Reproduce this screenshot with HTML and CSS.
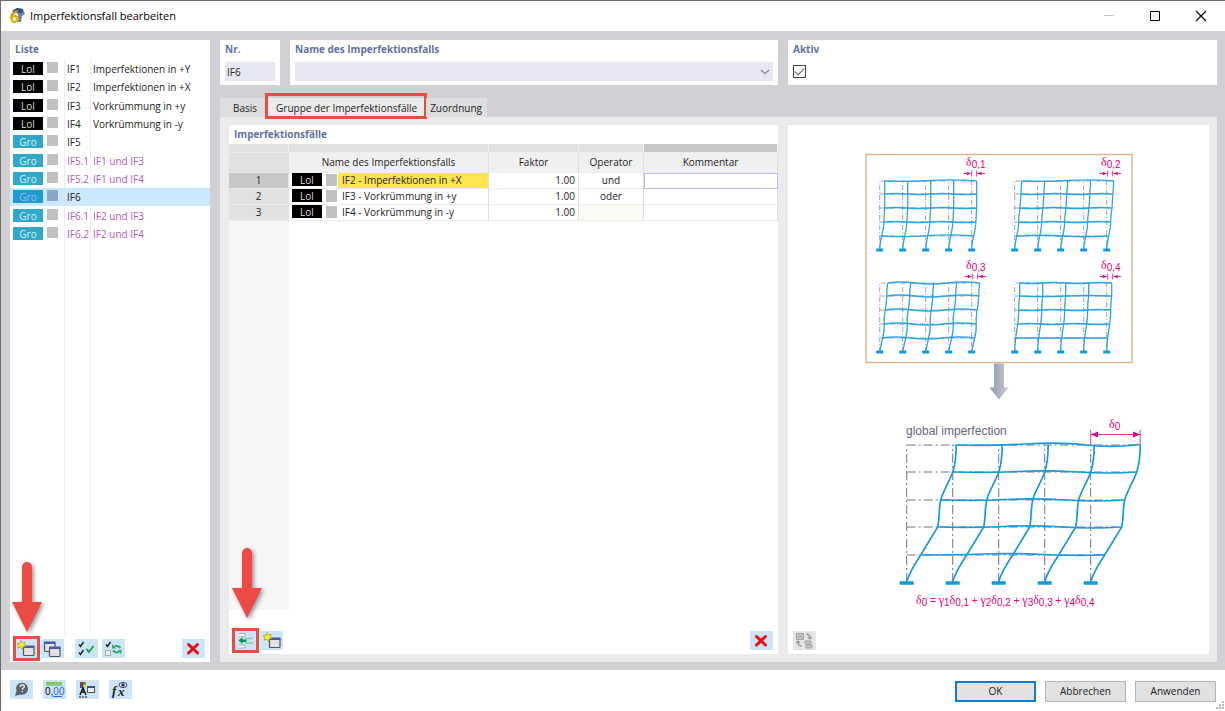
FILE: index.html
```
<!DOCTYPE html>
<html lang="de">
<head>
<meta charset="utf-8">
<title>Imperfektionsfall bearbeiten</title>
<link rel="stylesheet" href="styles.css">
</head>
<body>
<svg class="defs" aria-hidden="true">
  <defs>
    <g id="win">
      <rect x="9.500" y="7.500" width="10.500" height="9" rx="1" fill="#e2e2e2" stroke="#555" stroke-width="1.200" />
      <rect x="9" y="6.500" width="11.500" height="2.500" fill="#4a5a9a" />
    </g>
    <g id="new">
      <use href="#win" />
      <path d="M7 1.500l1.300 2.500 3-.8-1.300 2.600 2.200 1.600-3 .3-.7 2.800-1.800-2.300-2.700.8 1-2.500-2-1.800 2.900-.3z" fill="#f6ee28" stroke="#a99a1c" stroke-width=".7" />
    </g>
    <g id="tick"><path d="M0 2.500l1.500 2L4.500 0" fill="none" stroke="#222" stroke-width="1.400" /></g>
    <g id="cross"><path d="M6.500 5.500l9 8.500M15.500 5.500l-9 8.500" fill="none" stroke="#f00909" stroke-width="3" stroke-linecap="round" /></g>
    <g id="pointer"><path d="M11 5a5 5 0 0 1 10 0V40H31L16 70 1 40H11z" fill="#eb4b44" /></g>
    <path id="base" d="M-3.500 0h7" stroke="#0d9be0" stroke-width="3" />
    <g id="bases"><use href="#base" /><use href="#base" x="23" /><use href="#base" x="46" /><use href="#base" x="69" /><use href="#base" x="92" /></g>
    <path id="ghost" d="M0 0V-69H92V0M23 0V-69M46 0V-69M69 0V-69M0-14H92M0-28H92M0-42H92M0-56H92" fill="none" stroke="#8d8c9b" stroke-width=".8" stroke-dasharray="5 2 1 2" />
    <path id="c1" d="M0 0Q0-5 2-14T4.200-28 5-42V-69" />
    <path id="c2" d="M0 0Q0-5 2-14T4-28 5.300-42L7-69" />
    <path id="c3" d="M0 0Q1-6 3-14T4.500-28 5.500-42 7-56 8-69" />
    <path id="c4" d="M0 0Q0-6 1-14T3-28 4-42 5-56V-69" />
    <path id="cg" d="M0 0C2-8 8-18 14-27L31-55C33-64 32-74 34-82 36-90 43-101 46-110 49-119 49.500-128 49.500-137" />
    <g id="dim">
      <path d="M-8 0h7M5.500 0h8M0-3v6M5-3v6" stroke="#e5007d" stroke-width=".8" />
      <path d="M-1 0l-4-1.700v3.400zM6 0l4-1.700v3.400z" fill="#e5007d" />
    </g>
    <linearGradient id="steel"><stop offset="0" stop-color="#8796b5" /><stop offset=".4" stop-color="#a3abbd" /><stop offset="1" stop-color="#d2cbc5" /></linearGradient>
  </defs>
</svg>

<div class="window">
  <header class="titlebar">
    <svg class="app-icon" viewBox="0 0 16 16" aria-hidden="true">
      <path d="M3 3l5-3 6 1 2 5-3 2-1 6-4 0 1-8z" fill="#6c86ab" /><path d="M3 3l5-3 6 1-1 4-6 0z" fill="#32527f" />
      <path d="M8 3.500Q3 4 2.200 10" fill="none" stroke="#c79a17" stroke-width="2.500" stroke-linecap="round" />
      <circle cx="5.500" cy="11" r="3" fill="#fff6bd" stroke="#dfb51c" stroke-width="2.400" />
    </svg>
    <h1>Imperfektionsfall bearbeiten</h1>
    <div class="caption-buttons">
      <button type="button" aria-label="Minimieren"><svg viewBox="0 0 12 12"><path d="M1 5.500h10" stroke="#c4c4c4" /></svg></button>
      <button type="button" aria-label="Maximieren"><svg viewBox="0 0 12 12"><path d="M1.500 1.500h9v9h-9z" fill="none" stroke="#000" /></svg></button>
      <button type="button" aria-label="Schließen"><svg viewBox="0 0 12 12"><path d="M1 1l10 10M11 1L1 11" stroke="#000" stroke-width="1.200" /></svg></button>
    </div>
  </header>

  <main class="workspace">
    <section class="panel list-panel">
      <h2>Liste</h2>
      <div class="list-body">
        <table class="case-list">
          <tbody>
            <tr><td><div class="badge"><span class="chip">Lol</span><i class="swatch"></i></div></td><td>IF1</td><td>Imperfektionen in +Y</td></tr>
            <tr><td><div class="badge"><span class="chip">Lol</span><i class="swatch"></i></div></td><td>IF2</td><td>Imperfektionen in +X</td></tr>
            <tr><td><div class="badge"><span class="chip">Lol</span><i class="swatch"></i></div></td><td>IF3</td><td>Vorkrümmung in +y</td></tr>
            <tr><td><div class="badge"><span class="chip">Lol</span><i class="swatch"></i></div></td><td>IF4</td><td>Vorkrümmung in -y</td></tr>
            <tr><td><div class="badge"><span class="chip group">Gro</span><i class="swatch"></i></div></td><td>IF5</td><td></td></tr>
            <tr class="sub"><td><div class="badge"><span class="chip group">Gro</span><i class="swatch"></i></div></td><td>IF5.1</td><td>IF1 und IF3</td></tr>
            <tr class="sub"><td><div class="badge"><span class="chip group">Gro</span><i class="swatch"></i></div></td><td>IF5.2</td><td>IF1 und IF4</td></tr>
            <tr class="selected"><td><div class="badge"><span class="chip group">Gro</span><i class="swatch"></i></div></td><td>IF6</td><td></td></tr>
            <tr class="sub"><td><div class="badge"><span class="chip group">Gro</span><i class="swatch"></i></div></td><td>IF6.1</td><td>IF2 und IF3</td></tr>
            <tr class="sub"><td><div class="badge"><span class="chip group">Gro</span><i class="swatch"></i></div></td><td>IF6.2</td><td>IF2 und IF4</td></tr>
          </tbody>
        </table>
      </div>
      <div class="toolbar">
        <button type="button" class="tool marked" aria-label="Neu"><svg viewBox="0 0 23 19"><use href="#new" /></svg>
          <svg class="pointer" viewBox="0 0 32 72"><use href="#pointer" /></svg></button>
        <button type="button" class="tool" aria-label="Kopieren"><svg viewBox="0 0 23 19"><g transform="translate(-6 -4)"><use href="#win" /></g><g transform="translate(-1 1)"><use href="#win" /></g></svg></button>
        <button type="button" class="tool spaced" aria-label="Alle auswählen"><svg viewBox="0 0 23 19"><use href="#tick" x="4" y="3" /><use href="#tick" x="4" y="11" /><path d="M11.500 10l2.500 3 4.500-6" fill="none" stroke="#1eaa4b" stroke-width="2" /></svg></button>
        <button type="button" class="tool" aria-label="Auswahl umkehren"><svg viewBox="0 0 23 19"><use href="#tick" x="4" y="3" /><rect x="3.500" y="11.500" width="5" height="5" fill="#e8f2fa" stroke="#aaa" /><path d="M18.500 9q-3-3-6-1.500M11 11.500q3 3 6 1.500" fill="none" stroke="#2fa866" stroke-width="1.800" /><path d="M10 5v4.500h4zM19.500 15.500v-4.500h-4z" fill="#2fa866" /></svg></button>
        <button type="button" class="tool last" aria-label="Löschen"><svg viewBox="0 0 23 19"><use href="#cross" /></svg></button>
      </div>
    </section>

    <div class="editor">
      <div class="fields">
        <div class="id-fields">
          <div class="panel field"><label for="nr">Nr.</label><input id="nr" type="text" value="IF6"></div>
          <div class="panel field"><label for="name">Name des Imperfektionsfalls</label>
            <div class="select-wrap"><select id="name"><option></option></select><svg viewBox="0 0 8 6" aria-hidden="true"><path d="M0 1l4 3.700L8 1" fill="none" stroke="#888" stroke-width="1.300" /></svg></div>
          </div>
        </div>
        <div class="panel field"><label for="active">Aktiv</label><input id="active" type="checkbox" checked></div>
      </div>

      <div class="tabs" role="tablist">
        <button type="button" role="tab" aria-selected="false">Basis</button>
        <button type="button" role="tab" aria-selected="true">Gruppe der Imperfektionsfälle</button>
        <button type="button" role="tab" aria-selected="false">Zuordnung</button>
      </div>

      <div class="tab-page">
        <section class="panel cases-panel">
          <h2>Imperfektionsfälle</h2>
          <div class="cases-body">
            <table class="cases">
              <colgroup><col class="c-no"><col class="c-name"><col class="c-factor"><col class="c-op"><col></colgroup>
              <thead>
                <tr class="strip"><td></td><td></td><td></td><td></td><td class="current"></td></tr>
                <tr><td class="corner"></td><th scope="col">Name des Imperfektionsfalls</th><th scope="col">Faktor</th><th scope="col">Operator</th><th scope="col">Kommentar</th></tr>
              </thead>
              <tbody>
                <tr><th scope="row" class="current">1</th><td class="name"><div><span class="chip">Lol</span><span class="picked"><i class="swatch"></i>IF2 - Imperfektionen in +X</span></div></td><td class="num">1.00</td><td class="op">und</td><td class="focus"></td></tr>
                <tr><th scope="row">2</th><td class="name"><div><span class="chip">Lol</span><span><i class="swatch"></i>IF3 - Vorkrümmung in +y</span></div></td><td class="num">1.00</td><td class="op">oder</td><td></td></tr>
                <tr><th scope="row">3</th><td class="name"><div><span class="chip">Lol</span><span><i class="swatch"></i>IF4 - Vorkrümmung in -y</span></div></td><td class="num">1.00</td><td class="op locked"></td><td></td></tr>
              </tbody>
            </table>
          </div>
          <div class="toolbar">
            <button type="button" class="tool marked" aria-label="Zeile einfügen"><svg viewBox="0 0 23 19"><path d="M6 2.500h6v3h-6M6 14h6v3h-6" fill="#fff" stroke="#999" stroke-width=".8" /><path d="M12 7.500h8M12 12h8" stroke="#86c9ac" stroke-width="1.500" /><path d="M5.500 9.500l4-3.500v2.500h4v2.500h-4v2z" fill="#0b9250" /></svg>
              <svg class="pointer" viewBox="0 0 32 72"><use href="#pointer" /></svg></button>
            <button type="button" class="tool" aria-label="Neu"><svg viewBox="0 0 23 19"><use href="#new" /></svg></button>
            <button type="button" class="tool last" aria-label="Löschen"><svg viewBox="0 0 23 19"><use href="#cross" /></svg></button>
          </div>
        </section>

        <section class="panel preview">
          <svg class="diagram" viewBox="855 145 287 470" role="img" aria-label="global imperfection">
            <rect x="866" y="154.500" width="266" height="208" fill="#fff" stroke="#dfb88e" stroke-width="1.500" />
            <g transform="translate(879.700 250)">
              <use href="#ghost" />
              <g class="frame"><use href="#c1" /><use href="#c1" x="23" /><use href="#c1" x="46" /><use href="#c1" x="69" /><use href="#c1" x="92" />
              <path d="M2-14q23 1.500 46-.3t46 .3M4-28q12-1 23 0t23 0 23 0 23 0M5-42q12-1 23 0t23 0 23 0 23 0M5-56q12-1 23 0t23 0 23 0 23 0M5-69q23 1 46-.5t46 .5" /></g>
              <use href="#bases" />
              <use href="#dim" x="92" y="-76.500" />
            </g>
            <g transform="translate(1014.700 250)">
              <use href="#ghost" />
              <g class="frame"><use href="#c2" /><use href="#c2" x="23" /><use href="#c2" x="46" /><use href="#c2" x="69" /><use href="#c2" x="92" />
              <path d="M2-14q23-1.500 46 0t46 0M4-28q12 1 23 0t23 0 23 0 23 0M5-42q12 1 23 0t23 0 23 0 23 0M6-56q12 1 23 0t23 0 23 0 23 0M7-69q23 1 46-.5t46 .5" /></g>
              <use href="#bases" />
              <use href="#dim" x="93" y="-76.500" />
            </g>
            <g transform="translate(879.700 352)">
              <use href="#ghost" />
              <g class="frame"><use href="#c3" /><use href="#c3" x="23" /><use href="#c3" x="46" /><use href="#c3" x="69" /><use href="#c3" x="92" />
              <path d="M3-14q12-2 28 0t32 0 32 0M4.500-28q12-2 28 0t32 0 32 0M5.500-42q12-2 28 0t32 0 32 0M7-56q12-2 28 0t32 0 32 0M8-69q12-2 28 0t32 0 32 0" /></g>
              <use href="#bases" />
              <use href="#dim" x="93" y="-75.500" />
            </g>
            <g transform="translate(1014.700 352)">
              <use href="#ghost" />
              <g class="frame"><use href="#c4" /><use href="#c4" x="23" /><use href="#c4" x="46" /><use href="#c4" x="69" /><use href="#c4" x="92" />
              <path d="M1-14q23 0 46 0t46 0M3-28q12-1 23 0t23 0 23 0 23 0M4-42q12 1 23 0t23 0 23 0 23 0M5-56q23 1 46 0t46 0M5-69q12 1 23 0t23 0 23 0 23 0" /></g>
              <use href="#bases" />
              <use href="#dim" x="93" y="-75.500" />
            </g>
            <g class="formula">
              <text x="966" y="166"><tspan class="greek">δ</tspan><tspan class="index" dy="2">0,1</tspan></text>
              <text x="1101" y="166"><tspan class="greek">δ</tspan><tspan class="index" dy="2">0,2</tspan></text>
              <text x="966" y="269"><tspan class="greek">δ</tspan><tspan class="index" dy="2">0,3</tspan></text>
              <text x="1101" y="269"><tspan class="greek">δ</tspan><tspan class="index" dy="2">0,4</tspan></text>
              <text x="1109" y="428"><tspan class="greek">δ</tspan><tspan class="index" dy="2">0</tspan></text>
              <text x="916" y="604"><tspan class="greek">δ</tspan><tspan class="index" dy="2">0</tspan><tspan dy="-2"> = </tspan><tspan class="greek">γ</tspan><tspan class="index" dy="2">1</tspan><tspan class="greek" dy="-2">δ</tspan><tspan class="index" dy="2">0,1</tspan><tspan dy="-2"> + </tspan><tspan class="greek">γ</tspan><tspan class="index" dy="2">2</tspan><tspan class="greek" dy="-2">δ</tspan><tspan class="index" dy="2">0,2</tspan><tspan dy="-2"> + </tspan><tspan class="greek">γ</tspan><tspan class="index" dy="2">3</tspan><tspan class="greek" dy="-2">δ</tspan><tspan class="index" dy="2">0,3</tspan><tspan dy="-2"> + </tspan><tspan class="greek">γ</tspan><tspan class="index" dy="2">4</tspan><tspan class="greek" dy="-2">δ</tspan><tspan class="index" dy="2">0,4</tspan></text>
            </g>
            <path d="M994 363.500h10v24h4.500l-9.500 12-9.500-12h4.500z" fill="url(#steel)" />
            <text class="caption" x="906" y="435">global imperfection</text>
            <g transform="translate(906.700 582)">
              <path d="M0 0V-137M46 0V-137M92 0V-137M138 0V-137M184 0V-137M0-27H196M0-55H210M0-82H215M0-110H225M0-137H230" fill="none" stroke="#77768a" stroke-dasharray="9 3 2 3" />
              <g class="frame large"><use href="#cg" /><use href="#cg" x="46" /><use href="#cg" x="92" /><use href="#cg" x="138" /><use href="#cg" x="184" />
              <path d="M14-27q35 0 62-1t60 .5 62 .5M31-55q35 1 65-.5t60 .5 59 0M34-82q35 1 65-.5t60 .5 59 0M46-110q35 1 65-.5t60 .5 59 0M49-137q35 1 70-1t60 1 54-.5" /></g>
              <path d="M-7 1h14M39 1h14M85 1h14M131 1h14M177 1h14" stroke="#0d9be0" stroke-width="3.500" />
            </g>
            <path d="M1091 434.500h49M1090.700 430v15M1140.200 430v15" stroke="#e5007d" stroke-width=".8" />
            <path d="M1091 434.500l7-3v6zM1140 434.500l-7-3v6z" fill="#e5007d" />
          </svg>
          <div class="toolbar">
            <button type="button" class="tool disabled" disabled aria-label="Bild wechseln"><svg viewBox="0 0 23 19"><path d="M3.500 2.500h7v6h-7zM5 7l2-3 2 3M12 10h6v3h-6zM13 14h6v3h-6z" fill="#c9c9c9" stroke="#a0a0a0" /><path d="M13 3q4 0 4 4M15 6l2 2 2-2M9 15q-4 0-4-4M3 12l2-2 2 2" fill="none" stroke="#9a9a9a" stroke-width="1.300" /></svg></button>
          </div>
        </section>
      </div>
    </div>
  </main>

  <footer class="footer">
    <button type="button" class="tool" aria-label="Hilfe"><svg viewBox="0 0 23 19"><path d="M5 16l1.500-5a6 6 0 1 1 4 3.500q-3 .5-5.500 1.500z" fill="#5d6064" /><path d="M10 7q.5-2.300 2.500-2.300t1.800 2.300q-.5 1-1.800 1.500v1.200M12.300 11v1.300" fill="none" stroke="#e4eef6" stroke-width="1.400" /></svg></button>
    <button type="button" class="tool" aria-label="Einheiten"><svg viewBox="0 0 23 19"><rect x="3" y="2" width="16" height="4" fill="#8cd07c" /><path d="M5 2v2M8 2v2M11 2v2M14 2v2M17 2v2" stroke="#58a44c" stroke-width=".8" /><text x="2" y="15" class="digits">0,<tspan fill="#2869dd">00</tspan></text><path d="M10 16.500h9" stroke="#2869dd" /></svg></button>
    <button type="button" class="tool" aria-label="Anzeige"><svg viewBox="0 0 23 19"><path d="M4 2h3v3h-3z" fill="#e01b1b" /><path d="M7 2h3v3h-3z" fill="#32b032" /><path d="M4 5h3v3h-3z" fill="#2a4fe0" /><path d="M7 5h3v3h-3z" fill="#f2d921" /><path d="M4 15l3-7 3 7M5 12h4" fill="none" stroke="#111" stroke-width="1.500" /><path d="M3 17h9" stroke="#111" stroke-dasharray="2 1" /><rect x="11.500" y="6.500" width="7" height="6" fill="#eee" stroke="#555" /><path d="M11 7h8" stroke="#3c4b8c" stroke-width="2" /></svg></button>
    <button type="button" class="tool" aria-label="Funktion"><svg viewBox="0 0 23 19"><text x="3" y="15" class="fx">f<tspan x="9" y="16">x</tspan></text><ellipse cx="14" cy="5" rx="4" ry="2.500" fill="#eef" stroke="#33406f" /><circle cx="14" cy="5" r="1.800" fill="#28356c" /></svg></button>
    <div class="actions">
      <button type="button" class="action primary">OK</button>
      <button type="button" class="action">Abbrechen</button>
      <button type="button" class="action">Anwenden</button>
    </div>
    <svg class="grip" viewBox="0 0 9 9" aria-hidden="true"><path d="M6 1h2M3 4h2M6 4h2M0 7h2M3 7h2M6 7h2" stroke="#bdbdbd" stroke-width="2" /></svg>
  </footer>
</div>
</body>
</html>
```
FILE: styles.css
```
* { box-sizing: border-box; }

body {
  margin: 0;
  font: 10px/14px "Open Sans", "Noto Sans", sans-serif;
  color: #222;
}

button, input, select { font: inherit; color: inherit; }
button { padding: 0; border: 0; background: none; }
h1, h2 { margin: 0; }
table { border-collapse: separate; border-spacing: 0; table-layout: fixed; width: 100%; }
td, th { padding: 0; font-weight: 400; white-space: nowrap; }
svg { display: block; overflow: visible; }
.defs { position: absolute; width: 0; height: 0; }

.window {
  display: flex;
  flex-direction: column;
  min-height: 100vh;
  background: #fff;
  border-top: 1px solid #6b6b6b;
  border-left: 1px solid #6b6b6b;
}

.titlebar { display: flex; align-items: center; height: 30px; padding-left: 8px; }
.app-icon { width: 16px; height: 16px; }
.titlebar h1 { margin-left: 5px; font-size: 11px; font-weight: 400; color: #000; }
.caption-buttons { display: flex; margin-left: auto; padding-right: 1px; }
.caption-buttons button { width: 46px; height: 28px; display: grid; place-items: center; }
.caption-buttons svg { width: 12px; height: 12px; }

.workspace {
  flex: 1;
  display: grid;
  grid-template-columns: 200px 1fr;
  gap: 10px;
  padding: 9px 8px 8px 9px;
  background: #d1d0d5;
}

.panel { background: #fff; }
.panel h2, .field label {
  display: block;
  padding-left: 5px;
  font-size: 10px;
  line-height: 18px;
  font-weight: 700;
  color: #64739b;
}

.list-panel { display: flex; flex-direction: column; }
.list-panel h2 { height: 20px; }
.list-body {
  flex: 1;
  background:
    linear-gradient(#eee, #eee) 54px 0 / 1px 100% no-repeat,
    linear-gradient(#eee, #eee) 80px 0 / 1px 100% no-repeat;
}
.case-list { height: 183px; }
.case-list td:nth-child(1) { width: 54px; padding-left: 3px; }
.case-list td:nth-child(2) { width: 26px; padding-left: 3px; }
.case-list td:nth-child(3) { padding-left: 3px; }
.sub { color: #b05cb8; }
.selected { background: #cce8ff; }
.selected .group { background: #2499d0; color: #8cc4e4; }
.selected .swatch { background: #86a8cc; }

.badge { display: flex; height: 14px; }
.chip {
  width: 30px;
  height: 13px;
  line-height: 15px;
  text-align: center;
  background: #000;
  color: #ddd;
}
.group { background: #31a8c8; color: #d4f0f6; }
.swatch { display: inline-block; width: 11px; height: 11px; margin-left: 4px; background: #c0c0c0; }

.toolbar { display: flex; gap: 4px; }
.list-panel .toolbar { padding: 5px 5px 4px 4px; }
.tool { position: relative; width: 23px; height: 19px; background: #cce4f7; }
.tool > svg:first-child { width: 23px; height: 19px; }
.tool.last { margin-left: auto; }
.spaced { margin-left: 7px; }
.disabled { background: #e6e6e6; }
.marked::after { content: ""; position: absolute; inset: -3px -3px -3px -1px; border: 3px solid #e94b45; }
.pointer {
  position: absolute;
  left: -3px;
  bottom: 24px;
  width: 32px;
  height: 72px;
  filter: drop-shadow(2px 2px 2px #0006);
}
.cases-panel .pointer { bottom: 30px; left: -2px; }

.editor { display: flex; flex-direction: column; min-width: 0; }
.fields { display: grid; grid-template-columns: 558fr 429fr; gap: 10px; height: 45px; }
.id-fields { display: grid; grid-template-columns: 60px 1fr; gap: 10px; }
.field input[type="text"], .field select {
  display: block;
  width: 100%;
  height: 19px;
  border: 0;
  border-radius: 0;
  padding: 2px;
  background: #e7e7f2;
  appearance: none;
}
.field { padding: 0 5px; }
.field label { height: 22px; padding-left: 0; }
.select-wrap { position: relative; }
.select-wrap svg { position: absolute; right: 4px; top: 7px; width: 8px; height: 6px; }
.field input[type="checkbox"] {
  display: grid;
  place-items: center;
  width: 13px;
  height: 13px;
  margin: 3px 0 0;
  border: 1px solid #444;
  background: #fff;
  appearance: none;
}
.field input:checked::before {
  content: "";
  width: 8px;
  height: 4px;
  margin-bottom: 3px;
  border: solid #555;
  border-width: 0 0 1px 1px;
  transform: rotate(-45deg);
}

.tabs { display: flex; margin-top: 13px; }
.tabs button { position: relative; height: 19px; padding: 0 5px 0 4px; background: #dedee0; }
.tabs button:first-child { padding: 0 9px 0 13px; }
.tabs button[aria-selected="true"] { padding: 0 9px 0 10px; background: #ebebeb; }
.tabs [aria-selected="true"]::after { content: ""; position: absolute; inset: -5px -1px -2px; border: 3px solid #e94b45; }

.tab-page {
  flex: 1;
  display: grid;
  grid-template-columns: 549fr 421fr;
  gap: 10px;
  padding: 8px 8px 8px 9px;
  background: #ebebeb;
}

.cases-panel { display: flex; flex-direction: column; min-width: 0; }
.cases-panel h2 { height: 19px; }
.cases-body { flex: 1; background: linear-gradient(#f6f6f6, #f6f6f6) 0 0 / 60px 100% no-repeat; }
.cases-panel .toolbar { padding: 21px 5px 4px 4px; }

.c-no { width: 60px; }
.c-name { width: 200px; }
.c-factor { width: 90px; }
.c-op { width: 65px; }
.cases td, .cases th { height: 16px; line-height: 15px; border-right: 1px solid #dedede; border-bottom: 1px solid #ececec; }
.cases thead th { height: 20px; background: #f0f0f0; }
.cases .corner { background: #e1e1e1; }
.cases .strip td { height: 9px; background: #e1e1e1; border-right-color: #f0f0f0; }
.cases tbody th { background: #e1e1e1; }
.cases .current, .cases .strip .current { background: #c7c7c7; }
.cases tbody td { background: #fff; }
.name div { display: flex; align-items: flex-start; height: 15px; padding-left: 3px; }
.name span:last-child { flex: 1; line-height: 15px; }
.name .swatch { margin: 1px 5px 0 4px; vertical-align: top; height: 12px; }
.picked { background: linear-gradient(90deg, #fff 16px, #ffe34f 16px); }
.num { text-align: right; }
.cases .num { padding-right: 3px; }
.op { text-align: center; }
.cases tbody .locked { background: #f9faf3; }
.cases tbody .focus { outline: 1px solid #bdb9ec; outline-offset: -1px; }

.preview { display: flex; flex-direction: column; justify-content: space-between; padding: 20px 5px 4px; }
.diagram { width: 287px; height: 470px; align-self: center; }
.frame { fill: none; stroke: #2aa5e2; stroke-width: 1.3; }
.large { stroke: #159ade; stroke-width: 1.7; }
.formula { font: 10px "Liberation Sans", sans-serif; fill: #e5007d; }
.formula .greek { font: 12px "Liberation Serif", serif; }
.formula .index { font-size: 10px; }
.caption { font: 12px "Liberation Sans", sans-serif; fill: #66657a; }

.footer { position: relative; display: flex; gap: 11px; align-items: center; height: 41px; padding: 0 9px 2px 9px; }
.footer > .tool { margin-right: -1px; }
.actions { display: flex; gap: 9px; margin-left: auto; padding-top: 3px; }
.action { width: 81px; height: 21px; border: 1px solid #b4b4b4; background: #e1e1e1; }
.primary { border: 2px solid #0c7cd9; }
.grip { position: absolute; right: 0; bottom: 1px; width: 9px; height: 9px; }
.digits { font: 10px "Liberation Sans", sans-serif; }
.fx { font: italic 700 13px "Liberation Serif", serif; fill: #222; }
```
